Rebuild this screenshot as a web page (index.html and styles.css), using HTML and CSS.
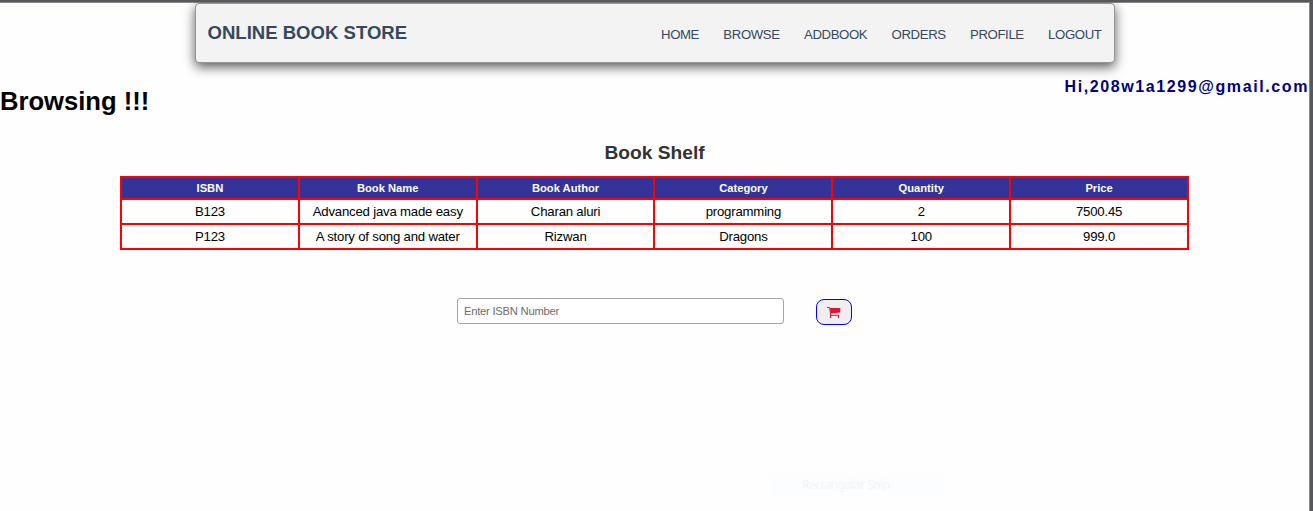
FILE: index.html
```html
<!DOCTYPE html>
<html lang="en">
<head>
<meta charset="utf-8">
<title>Online Book Store</title>
<link rel="stylesheet" href="styles.css">
</head>
<body>
<header class="navbar">
  <div class="brand">ONLINE BOOK STORE</div>
  <nav class="links">
    <a>HOME</a><a>BROWSE</a><a>ADDBOOK</a><a>ORDERS</a><a>PROFILE</a><a>LOGOUT</a>
  </nav>
</header>
<div class="greeting">
  <h1 class="heading">Browsing !!!</h1>
  <div class="user">Hi,208w1a1299@gmail.com</div>
</div>
<h2 class="shelf-title">Book Shelf</h2>
<table class="shelf">
  <thead>
    <tr><th>ISBN</th><th>Book Name</th><th>Book Author</th><th>Category</th><th>Quantity</th><th>Price</th></tr>
  </thead>
  <tbody>
    <tr><td>B123</td><td>Advanced java made easy</td><td>Charan aluri</td><td>programming</td><td>2</td><td>7500.45</td></tr>
    <tr><td>P123</td><td>A story of song and water</td><td>Rizwan</td><td>Dragons</td><td>100</td><td>999.0</td></tr>
  </tbody>
</table>
<form class="order">
  <input class="isbn" type="text" placeholder="Enter ISBN Number">
  <button class="cart" type="button" aria-label="Add to cart">
    <svg width="14" height="14" viewBox="0 0 14 14" fill="none" stroke="#dc143c">
      <path d="M0 2.5h2.6l1.2 7.8h8.2" stroke-width="1"/>
      <path d="M2.9 3h10.4v4.6L3.9 8.6z" fill="#dc143c" stroke="none"/>
      <path d="M3.6 10v2.9M11.5 10v2.9" stroke-width="1.3"/>
    </svg>
  </button>
</form>
<div class="snip">Rectangular Snip</div>
</body>
</html>
```
FILE: styles.css
```css
* { box-sizing: border-box; }
html { height: 100%; background: #fefefe; }
body {
  margin: 0;
  height: 511px;
  overflow: hidden;
  padding: 1px 1px 0 0;
  border-top: 2px solid #57575c;
  border-right: 3px solid #57575c;
  box-shadow: inset -1px 1px #8a8a8c;
  background: #fefefe;
  font-family: "Liberation Sans", Arial, sans-serif;
  color: #000;
}
.navbar {
  display: flex;
  justify-content: space-between;
  width: 920px;
  height: 60px;
  margin: 0 auto;
  padding: 0 12px;
  border: 1px solid #959595;
  border-radius: 4px;
  background: #f3f3f3;
  box-shadow: 0 4px 12px rgba(0, 0, 0, .65);
}
.brand {
  padding-top: 18px;
  font-size: 18.56px;
  line-height: 21px;
  font-weight: bold;
  color: #34495e;
}
.links {
  display: flex;
  gap: 24.3px;
  padding-top: 23px;
  font-size: 13.2px;
  line-height: 15px;
  letter-spacing: -.38px;
  color: #34495e;
}
.greeting {
  display: flex;
  justify-content: space-between;
  height: 74px;
}
.heading {
  margin: 0;
  padding-top: 23px;
  font-size: 25.6px;
  line-height: 30px;
}
.user {
  padding-top: 14px;
  font-size: 16px;
  line-height: 19px;
  font-weight: bold;
  letter-spacing: 1.6px;
  color: #000080;
}
.shelf-title {
  margin: 0;
  height: 39px;
  padding-top: 5px;
  font-size: 19.2px;
  line-height: 22px;
  text-align: center;
  color: #333;
}
.shelf {
  width: 1069px;
  margin: 0 auto;
  table-layout: fixed;
  border-collapse: collapse;
  text-align: center;
}
.shelf th, .shelf td {
  border: 2px solid #f00;
  padding: 0;
}
.shelf th {
  height: 22px;
  background: #339;
  color: #fff;
  font-size: 11.2px;
  line-height: 13px;
}
.shelf td {
  height: 25px;
  font-size: 13.2px;
  line-height: 15px;
  letter-spacing: -.2px;
}
.order {
  display: flex;
  justify-content: center;
  gap: 32px;
  margin-top: 48px;
}
.isbn {
  width: 327px;
  height: 26px;
  padding: 0 6px;
  border: 1px solid #a3a3a3;
  border-radius: 3px;
  background: #fff;
  font: 11.2px "Liberation Sans", Arial, sans-serif;
  letter-spacing: -.23px;
}
.isbn::placeholder { color: #6c6c6c; }
.cart {
  display: flex;
  align-items: center;
  justify-content: center;
  width: 36px;
  height: 26px;
  margin-top: 1px;
  padding: 0;
  border: 1px solid #00f;
  border-radius: 8px;
  background: #efefef;
}
/* Fading hint that floats over the page */
.snip {
  position: absolute;
  left: 770px;
  top: 474px;
  width: 173px;
  height: 22px;
  padding-left: 32px;
  background: #fbfdfe;
  color: #f5f6f8;
  font: 12px/22px "Noto Sans", sans-serif;
  letter-spacing: -.5px;
}
```
